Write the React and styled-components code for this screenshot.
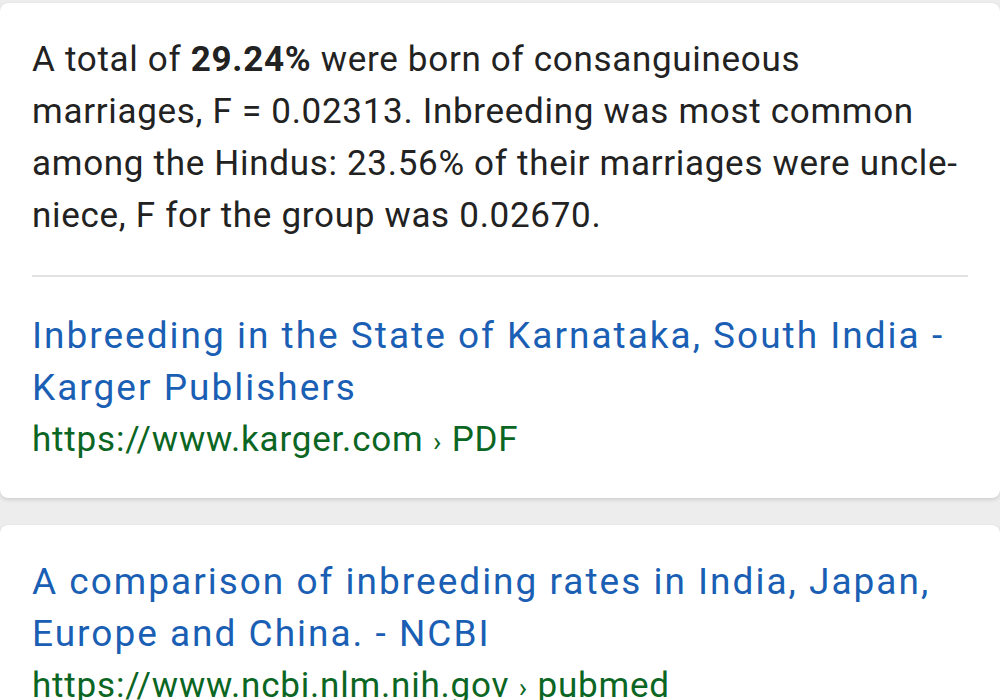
import React from 'react';
import styled, { createGlobalStyle } from 'styled-components';

const GlobalStyle = createGlobalStyle`
  html, body {
    margin: 0;
    padding: 0;
    background: #ededed;
    font-family: Roboto, "Noto Sans", "Liberation Sans", sans-serif;
  }
`;

const results = [
  {
    snippet: [
      <>A total of <b>29.24%</b> were born of consanguineous</>,
      'marriages, F = 0.02313. Inbreeding was most common',
      'among the Hindus: 23.56% of their marriages were uncle-',
      'niece, F for the group was 0.02670.',
    ],
    title: ['Inbreeding in the State of Karnataka, South India -', 'Karger Publishers'],
    host: 'https://www.karger.com',
    crumb: 'PDF',
  },
  {
    title: ['A comparison of inbreeding rates in India, Japan,', 'Europe and China. - NCBI'],
    host: 'https://www.ncbi.nlm.nih.gov',
    crumb: 'pubmed',
  },
];

function ResultCard({ snippet, title, host, crumb }) {
  return (
    <Card>
      {snippet && (
        <>
          <Text>
            {snippet.map((line, i) => (
              <Line key={i}>{line}</Line>
            ))}
          </Text>
          <Divider />
        </>
      )}
      <Title href="#">
        {title.map((line) => (
          <Line key={line}>{line}</Line>
        ))}
      </Title>
      <Url>
        {host} <Sep>›</Sep> {crumb}
      </Url>
    </Card>
  );
}

export default function App() {
  return (
    <>
      <GlobalStyle />
      <Feed>
        {results.map((r) => (
          <ResultCard key={r.host} {...r} />
        ))}
      </Feed>
    </>
  );
}

const Feed = styled.div`
  display: flex;
  flex-direction: column;
  gap: 27px;
  padding-top: 3px;
  height: 700px;
  overflow: hidden;
`;

const Card = styled.div`
  background: #fff;
  border-radius: 8px;
  box-shadow: 0 2px 4px rgba(0, 0, 0, 0.12), 0 0 1px rgba(0, 0, 0, 0.1);
  padding: 31px 32px 30px;
  display: flex;
  flex-direction: column;
  flex-shrink: 0;
`;

const Line = styled.span`
  display: block;
  white-space: nowrap;
`;

const Text = styled.p`
  margin: 0;
  font-size: 35px;
  line-height: 52px;
  letter-spacing: 0.7px;
  color: #222;

  b {
    font-weight: 700;
  }
`;

const Divider = styled.hr`
  border: none;
  height: 2px;
  background: #e2e2e2;
  margin: 33px 0 33px;
`;

const Title = styled.a`
  font-size: 37px;
  line-height: 52px;
  letter-spacing: 2px;
  color: #1a5fb4;
  text-decoration: none;
`;

const Url = styled.div`
  font-size: 35px;
  line-height: 52px;
  letter-spacing: 0.8px;
  color: #0b6623;
  white-space: nowrap;
`;

const Sep = styled.span`
  font-size: 28px;
`;
